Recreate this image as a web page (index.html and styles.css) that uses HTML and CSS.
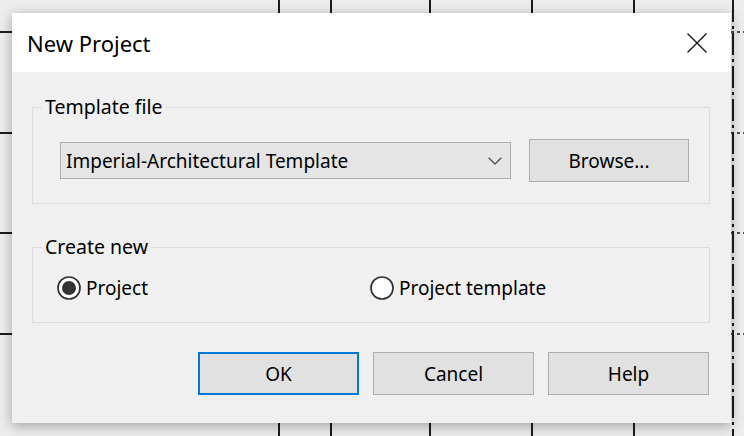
FILE: index.html
```html
<!DOCTYPE html>
<html lang="en">
<head>
<meta charset="utf-8">
<title>New Project</title>
<link rel="stylesheet" href="styles.css">
</head>
<body>
<svg class="canvas" width="744" height="436" viewBox="0 0 744 436" aria-hidden="true">
  <g stroke="#1c1c1c" stroke-width="2">
    <line x1="279" y1="0" x2="279" y2="436"/>
    <line x1="331" y1="0" x2="331" y2="436"/>
    <line x1="430" y1="0" x2="430" y2="436"/>
    <line x1="532" y1="0" x2="532" y2="436"/>
    <line x1="634" y1="0" x2="634" y2="436"/>
    <line x1="0" y1="32" x2="14" y2="32"/>
    <line x1="0" y1="133" x2="14" y2="133"/>
    <line x1="0" y1="233" x2="14" y2="233"/>
    <line x1="0" y1="334" x2="14" y2="334"/>
    <line x1="733" y1="0" x2="733" y2="436" stroke-dasharray="22 4 3 4"/>
    <line x1="731" y1="32" x2="744" y2="32" stroke-dasharray="3 3" stroke-width="1.5"/>
    <line x1="731" y1="133" x2="744" y2="133" stroke-dasharray="3 3" stroke-width="1.5"/>
    <line x1="731" y1="233" x2="744" y2="233" stroke-dasharray="3 3" stroke-width="1.5"/>
    <line x1="731" y1="334" x2="744" y2="334" stroke-dasharray="3 3" stroke-width="1.5"/>
  </g>
</svg>
<div class="dialog">
  <div class="titlebar">
    <span class="title">New Project</span>
    <span class="close" aria-label="Close">
      <svg width="20" height="20" viewBox="0 0 20 20"><path d="M0.5 0.5 L19.5 19.5 M19.5 0.5 L0.5 19.5" stroke="#111" stroke-width="1.3" fill="none"/></svg>
    </span>
  </div>
  <div class="content">
    <fieldset class="group">
      <legend>Template file</legend>
      <div class="template-row">
        <div class="select">
          <span class="select-text">Imperial-Architectural Template</span>
          <svg class="chevron" width="14" height="8" viewBox="0 0 14 8"><polyline points="0.7,0.7 7,7 13.3,0.7" fill="none" stroke="#555" stroke-width="1.4"/></svg>
        </div>
        <button class="btn browse">Browse...</button>
      </div>
    </fieldset>
    <fieldset class="group group-create">
      <legend>Create new</legend>
      <div class="radios">
        <label class="radio">
          <svg width="24" height="24" viewBox="0 0 24 24"><circle cx="12" cy="12" r="11" fill="#fff" stroke="#333" stroke-width="1.7"/><circle cx="12" cy="12" r="7" fill="#333"/></svg>
          <span>Project</span>
        </label>
        <label class="radio">
          <svg width="24" height="24" viewBox="0 0 24 24"><circle cx="12" cy="12" r="11" fill="#fff" stroke="#333" stroke-width="1.7"/></svg>
          <span>Project template</span>
        </label>
      </div>
    </fieldset>
    <div class="actions">
      <button class="btn default">OK</button>
      <button class="btn">Cancel</button>
      <button class="btn">Help</button>
    </div>
  </div>
</div>
</body>
</html>
```

FILE: styles.css
```css
html, body {
  margin: 0;
}
body {
  width: 744px;
  height: 436px;
  box-sizing: border-box;
  padding: 13px 0 0 12px;
  background: #ededed;
  position: relative;
  overflow: hidden;
  font-family: "Noto Sans", "Open Sans", sans-serif;
  color: #000;
}
.canvas {
  position: absolute;
  left: 0;
  top: 0;
}
.dialog {
  position: relative;
  width: 719px;
  height: 410px;
  background: #f0f0f0;
  box-shadow: 0 3px 12px rgba(0, 0, 0, 0.32);
  display: flex;
  flex-direction: column;
}
.titlebar {
  height: 59px;
  background: #fff;
  display: flex;
  align-items: center;
  justify-content: space-between;
  padding-left: 15px;
  padding-right: 24px;
}
.title {
  font-size: 22px;
  line-height: 24px;
}
.close {
  display: flex;
  width: 20px;
  height: 20px;
}
.content {
  padding: 0 21px 0 20px;
  display: flex;
  flex-direction: column;
}
.group {
  margin: 23px 0 0 0;
  padding: 0;
  border: 1px solid #dcdcdc;
  min-width: 0;
}
.group legend {
  margin-left: 9px;
  padding: 0 3px;
  font-size: 19.5px;
  line-height: 24px;
}
.template-row {
  display: flex;
  align-items: center;
  padding: 20px 19px 21px 27px;
  gap: 18px;
}
.select {
  box-sizing: border-box;
  width: 451px;
  height: 37px;
  border: 1px solid #adadad;
  background: #e5e5e5;
  display: flex;
  align-items: center;
  justify-content: space-between;
  padding: 0 8px 0 5px;
  font-size: 19px;
}
.btn {
  box-sizing: border-box;
  width: 161px;
  height: 43px;
  border: 1px solid #adadad;
  background: #e1e1e1;
  font-family: inherit;
  font-size: 19px;
  color: #000;
  padding: 0;
}
.btn.browse {
  width: 160px;
}
.btn.default {
  border: 2px solid #0078d7;
}
.group-create {
  margin-top: 31px;
}
.radios {
  display: grid;
  grid-template-columns: 313px auto;
  padding: 17px 0 22px 24px;
}
.radio {
  display: flex;
  align-items: center;
  gap: 5px;
  font-size: 19px;
  height: 24px;
}
.radio svg {
  flex: none;
}
.actions {
  display: flex;
  justify-content: flex-end;
  gap: 14px;
  margin-top: 29px;
  padding-right: 1px;
}
```
